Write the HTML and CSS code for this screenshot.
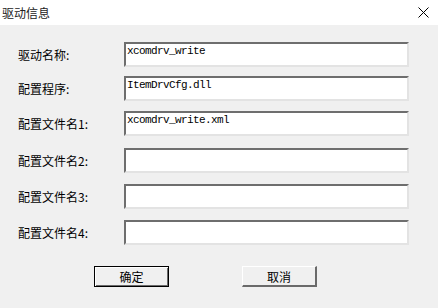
FILE: index.html
```html
<!DOCTYPE html>
<html>
<head>
  <title>驱动信息</title>
  <link rel="stylesheet" href="styles.css">
</head>
<body>

  <div class="titlebar">
    <span class="title">驱动信息</span>
    <svg class="close" width="11" height="11" viewBox="0 0 11 11">
      <path d="M0.5 0.5 L10.5 10.5 M10.5 0.5 L0.5 10.5" stroke="#000" stroke-width="1" fill="none"/>
    </svg>
  </div>

  <form class="dialog">
    <div class="row">
      <label>驱动名称:</label>
      <div class="field">xcomdrv_write</div>
    </div>
    <div class="row">
      <label>配置程序:</label>
      <div class="field">ItemDrvCfg.dll</div>
    </div>
    <div class="row">
      <label>配置文件名1:</label>
      <div class="field">xcomdrv_write.xml</div>
    </div>
    <div class="row">
      <label>配置文件名2:</label>
      <div class="field"></div>
    </div>
    <div class="row">
      <label>配置文件名3:</label>
      <div class="field"></div>
    </div>
    <div class="row">
      <label>配置文件名4:</label>
      <div class="field"></div>
    </div>

    <div class="buttons">
      <button type="button" class="btn default">确定</button>
      <button type="button" class="btn">取消</button>
    </div>
  </form>

</body>
</html>
```

FILE: styles.css
```css
body {
  margin: 0;
  width: 438px;
  height: 308px;
  background-color: #f0f0f0;
  font-family: "Noto Sans CJK SC", "Noto Sans", sans-serif;
  font-size: 12px;
  color: #000;
  overflow: hidden;
}

/* Title bar */
.titlebar {
  height: 25px;
  background-color: #fff;
  display: flex;
  align-items: center;
  justify-content: space-between;
  padding: 0 9px 0 2px;
}

.title {
  font-size: 12px;
  color: #222;
}

.close {
  display: block;
  margin-top: 0;
}

/* Form rows */
.dialog {
  padding: 17px 0 0 18px;
}

.row {
  display: flex;
  align-items: center;
  margin-bottom: 10px;
}

.row:nth-child(1) { margin-bottom: 9px; }
.row:nth-child(3) { margin-bottom: 12px; }
.row:nth-child(4) { margin-bottom: 11px; }
.row:nth-child(5) { margin-bottom: 11px; }

.row label {
  width: 106px;
  line-height: 16px;
}

.field {
  box-sizing: border-box;
  width: 285px;
  height: 25px;
  background-color: #fff;
  border-top: 2px solid #6e6e6e;
  border-left: 2px solid #6e6e6e;
  border-right: 2px solid #e3e3e3;
  border-bottom: 2px solid #e3e3e3;
  padding: 1px 0 0 1px;
  font-family: "Liberation Mono", monospace;
  font-size: 11px;
  letter-spacing: -0.6px;
  line-height: 13px;
}

/* Buttons */
.buttons {
  display: flex;
  gap: 73px;
  padding: 11px 0 0 76px;
}

.btn {
  box-sizing: border-box;
  width: 75px;
  height: 21px;
  padding: 0;
  font-family: "Noto Sans CJK SC", sans-serif;
  font-size: 12px;
  background-color: #f0f0f0;
  border-top: 1px solid #fff;
  border-left: 1px solid #fff;
  border-right: 2px solid #6a6a6a;
  border-bottom: 2px solid #6a6a6a;
}

.btn.default {
  border: 1px solid #000;
  box-shadow: inset 1px 1px 0 #fff, inset -1px -1px 0 #6a6a6a;
}
```
